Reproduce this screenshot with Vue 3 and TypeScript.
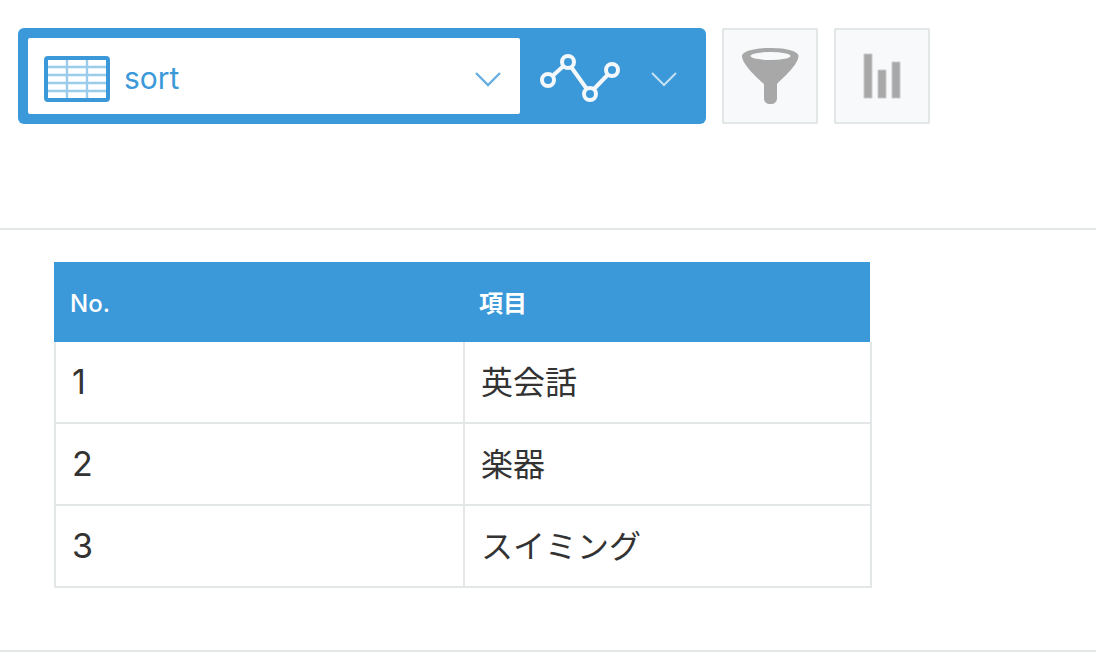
<script setup lang="ts">
import { ref } from 'vue'

interface Item {
  no: number
  name: string
}

const view = ref<string>('sort')
const views: string[] = ['sort']
const items: Item[] = [
  { no: 1, name: '英会話' },
  { no: 2, name: '楽器' },
  { no: 3, name: 'スイミング' },
]
</script>

<template>
  <main class="page">
    <header class="toolbar">
      <div class="switcher">
        <div class="view">
          <svg class="view-icon" viewBox="0 0 66 46" aria-hidden="true">
            <rect x="2" y="2" width="62" height="42" rx="2" fill="#fff" stroke="#3b99d9" stroke-width="4" />
            <path d="M23 4v38M43 4v38M4 11h58M4 19h58M4 27h58M4 35h58" fill="none" stroke="#9ccceb" stroke-width="2.400" />
          </svg>
          <select v-model="view" class="view-select" aria-label="View">
            <option v-for="v in views" :key="v" :value="v">{{ v }}</option>
          </select>
          <svg class="chevron" viewBox="0 0 24 16" aria-hidden="true">
            <path d="M0 1 L12 13 L24 1" fill="none" stroke="#66afe0" stroke-width="2.400" />
          </svg>
        </div>
        <button type="button" class="graph" aria-label="Graph">
          <svg class="graph-icon" viewBox="0 0 80 48" aria-hidden="true">
            <g fill="none" stroke="#f4f8fb" stroke-width="4">
              <path d="M12.5 22 L23.5 12 M31.5 13.5 L46.5 34.5 M54 35 L68 20.500" />
              <circle cx="8" cy="26" r="6" />
              <circle cx="28" cy="8" r="6" />
              <circle cx="50" cy="40" r="6" />
              <circle cx="72" cy="16" r="6" />
            </g>
          </svg>
          <svg class="chevron" viewBox="0 0 24 16" aria-hidden="true">
            <path d="M0 1 L12 13 L24 1" fill="none" stroke="#c4e0f3" stroke-width="2" />
          </svg>
        </button>
      </div>
      <button type="button" class="tool" aria-label="Filter">
        <svg class="tool-icon" viewBox="0 0 56 56" aria-hidden="true">
          <path
            d="M0 8 C0 3 12 0 28 0 C44 0 56.500 3 56.500 8 C56.500 16 42 29 35 36 V50 C35 54 32.500 56 28.500 56 C24.500 56 22 54 22 50 V36 C15 30 0 16 0 8 Z"
            fill="#a8a8a8"
          />
          <ellipse cx="28.500" cy="8" rx="20" ry="4" fill="#f7f9fa" />
        </svg>
      </button>
      <button type="button" class="tool" aria-label="Chart">
        <svg class="tool-icon" viewBox="0 0 56 56" aria-hidden="true">
          <path d="M10 6h8v44h-8zM24 22h8v28h-8zM38 14h8v36h-8z" fill="#a8a8a8" stroke="#c8c9ca" stroke-width="1" />
        </svg>
      </button>
    </header>
    <section class="records">
      <table class="grid">
        <thead>
          <tr>
            <th scope="col">No.</th>
            <th scope="col">項目</th>
          </tr>
        </thead>
        <tbody>
          <tr v-for="item in items" :key="item.no">
            <td class="number">{{ item.no }}</td>
            <td>{{ item.name }}</td>
          </tr>
        </tbody>
      </table>
    </section>
  </main>
</template>

<style>
body {
  background: #fff;
}
</style>

<style scoped>
.page {
  color: #333;
  font-family: Inter, "Noto Sans CJK JP", sans-serif;
}

.page *,
.page *::before {
  box-sizing: border-box;
}

svg {
  display: block;
  flex: none;
  overflow: visible;
}

.toolbar {
  display: flex;
  align-items: stretch;
  gap: 16px;
  padding: 28px 18px 104px;
}

.switcher {
  display: flex;
  flex: 0 1 688px;
  padding: 10px;
  border-radius: 6px;
  background: #3b99d9;
}

.view {
  display: grid;
  grid-template-columns: 66px 1fr 24px;
  align-items: center;
  flex: 1;
  min-width: 0;
  padding: 0 20px 0 16px;
  border-radius: 2px;
  background: #fff;
}

.view-icon {
  grid-area: 1 / 1;
  width: 66px;
  height: 46px;
  margin-top: 6px;
}

.view-select {
  grid-area: 1 / 1 / 2 / 4;
  width: 100%;
  height: 76px;
  padding: 4px 32px 0 80px;
  border: 0;
  background: transparent;
  color: #3b99d9;
  font-family: inherit;
  font-size: 30px;
  line-height: 40px;
  appearance: none;
  cursor: pointer;
}

.chevron {
  width: 24px;
  height: 16px;
  margin-top: 8px;
}

.view .chevron {
  grid-area: 1 / 3;
  pointer-events: none;
}

.graph {
  display: flex;
  align-items: center;
  gap: 32px;
  padding: 0 20px;
  border: 0;
  background: transparent;
  cursor: pointer;
}

.graph-icon {
  width: 80px;
  height: 48px;
  margin-top: 4px;
}

.tool {
  display: flex;
  align-items: center;
  justify-content: center;
  flex: none;
  width: 96px;
  padding: 0;
  border: 2px solid #e3e7e8;
  background: #f7f9fa;
  cursor: pointer;
}

.tool-icon {
  width: 56px;
  height: 56px;
}

.records {
  padding: 32px 54px 62px;
  border-top: 2px solid #e3e7e8;
  border-bottom: 2px solid #e3e7e8;
}

.grid {
  width: 100%;
  max-width: 818px;
  border-collapse: separate;
  border-spacing: 0;
  table-layout: fixed;
}

th {
  height: 80px;
  padding: 4px 16px 0;
  background: #3b99d9;
  background-clip: padding-box;
  color: #fff;
  font-size: 24px;
  font-weight: 500;
  line-height: 32px;
  text-align: left;
}

th:last-child {
  border-right: 2px solid transparent;
  font-weight: 700;
}

td {
  height: 82px;
  padding: 2px 16px 0;
  border-bottom: 2px solid #e3e7e8;
  border-left: 2px solid #e3e7e8;
  font-size: 32px;
  line-height: 48px;
}

td:last-child {
  border-right: 2px solid #e3e7e8;
}

.number {
  padding-top: 0;
  font-size: 34px;
}
</style>
